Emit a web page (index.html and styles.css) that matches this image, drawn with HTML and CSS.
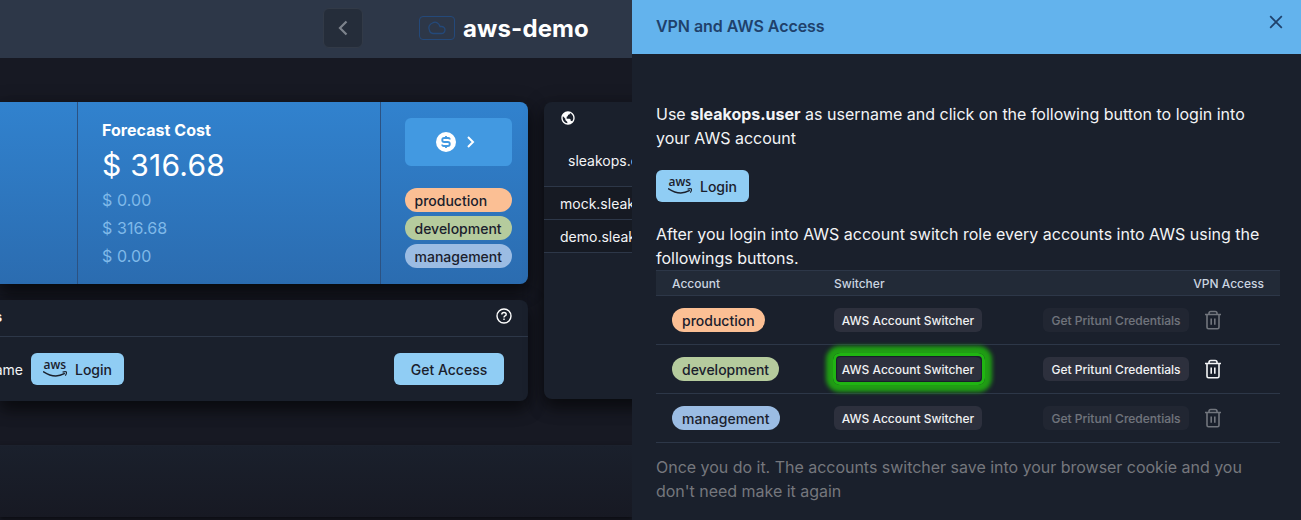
FILE: index.html
```html
<!DOCTYPE html>
<html lang="en">
<head>
<meta charset="utf-8">
<title>VPN and AWS Access</title>
<link rel="stylesheet" href="styles.css">
</head>
<body>
<svg class="defs" width="0" height="0">
  <symbol id="aws" viewBox="0 0 24 16">
    <text x="0.6" y="8.2" class="aws-word" textLength="22.6" lengthAdjust="spacingAndGlyphs">aws</text>
    <path d="M.6 10.800Q11.500 18 21.300 12.700" fill="none" stroke="currentColor" stroke-width="1.400" stroke-linecap="round"/>
    <path d="M19.600 11.100Q22.500 10.200 23.400 10.900Q23.800 12.700 22.300 14.600" fill="none" stroke="currentColor" stroke-width="1.100"/>
  </symbol>
  <symbol id="trash" viewBox="0 0 18 20">
    <path d="M1 4.500h16M5 4.300V3.300Q5 1.500 6.800 1.500h4.400Q13 1.500 13 3.300v1M3 4.500v12.700Q3 18.700 4.500 18.700h9Q15 18.700 15 17.200V4.500M7.200 8.500v6.300M10.800 8.500v6.300" fill="none" stroke="currentColor" stroke-width="1.600" stroke-linecap="butt"/>
  </symbol>
</svg>
<div class="screen">
  <main class="page">
    <header class="topbar">
      <button class="back"><svg width="20" height="20" viewBox="0 0 20 20"><path d="M13.500 3.500 7 10 13.500 16.500" fill="none" stroke="currentColor" stroke-width="2.200"/></svg></button>
      <span class="cloud"><svg width="18" height="14" viewBox="0 0 18 14"><path d="M5 12.500a4 4 0 0 1-3.600-3.500A5 5 0 0 1 4.500 2C7.200.3 10.900 1.300 12 5.500H13.500a3.500 3.500 0 0 1 0 7z" fill="none" stroke="currentColor" stroke-width="1.300"/></svg></span>
      <h1>aws-demo</h1>
    </header>
    <div class="content">
      <div class="left">
        <section class="cost">
          <div class="cost-prev"></div>
          <div class="forecast">
            <strong>Forecast Cost</strong>
            <div class="total">$ 316.68</div>
            <div class="amount">$ 0.00</div>
            <div class="amount">$ 316.68</div>
            <div class="amount">$ 0.00</div>
          </div>
          <div class="cost-side">
            <button class="money">
              <svg width="20" height="20" viewBox="0 0 20 20"><circle cx="10" cy="10" r="10" fill="#fff"/><path d="M13.800 7.600Q13.800 6 12.200 6H8.300Q6.200 6 6.200 8T8.300 10h3.400q2.100 0 2.100 2t-2.100 2H7.800Q6.200 14 6.200 12.400M10 4v2M10 14v2" fill="none" stroke="#4299e1" stroke-width="1.800"/></svg>
              <svg width="8" height="12" viewBox="0 0 8 12"><path d="M1 1l5 5-5 5" fill="none" stroke="#fff" stroke-width="2"/></svg>
            </button>
            <div class="tags"><span class="tag orange">production</span><span class="tag green">development</span><span class="tag blue">management</span></div>
          </div>
        </section>
        <section class="access">
          <div class="access-head"><b>Access</b><svg width="16" height="16" viewBox="0 0 16 16"><circle cx="8" cy="8" r="7" fill="none" stroke="#fff" stroke-width="1.400"/><path d="M5.800 6.500Q5.800 4.500 8 4.500T10.200 6.400Q10.200 7.300 9 7.900Q8 8.400 8 9.500M8 10.500v1.500" fill="none" stroke="#fff" stroke-width="1.400"/></svg></div>
          <div class="access-body"><span class="who">username</span><button class="btn login"><svg width="24" height="16"><use href="#aws"/></svg><span>Login</span></button><button class="btn get">Get Access</button></div>
        </section>
      </div>
      <section class="domains">
        <div class="globe"><svg width="16" height="16" viewBox="0 0 24 24" fill="#fff"><path d="M12 2C6.486 2 2 6.486 2 12s4.486 10 10 10 10-4.486 10-10S17.514 2 12 2zM4 12c0-.899.156-1.762.431-2.569L6 11l2 2v2l2 2 1 1v1.931C7.061 19.436 4 16.072 4 12zm14.330 4.873C17.677 16.347 16.687 16 16 16v-1a2 2 0 0 0-2-2h-4v-3a2 2 0 0 0 2-2V7h1a2 2 0 0 0 2-2v-.411C17.928 5.778 20 8.650 20 12a7.947 7.947 0 0 1-1.670 4.873z"/></svg></div>
        <div class="root">sleakops.com</div>
        <div class="domain">mock.sleakops.com</div>
        <div class="domain">demo.sleakops.com</div>
      </section>
    </div>
    <div class="strip"></div>
  </main>
  <aside class="drawer">
    <header class="drawer-head"><h2>VPN and AWS Access</h2><svg width="14" height="14" viewBox="0 0 14 14"><path d="M1.200 1.200l11.600 11.600M12.800 1.200 1.200 12.800" stroke="currentColor" stroke-width="1.700"/></svg></header>
    <div class="drawer-body">
      <p>Use <b>sleakops.user</b> as username and click on the following button to login into your AWS account</p>
      <button class="btn login"><svg width="24" height="16"><use href="#aws"/></svg><span>Login</span></button>
      <p>After you login into AWS account switch role every accounts into AWS using the followings buttons.</p>
      <div class="table">
        <div class="thead"><span>Account</span><span>Switcher</span><span class="vpn">VPN Access</span></div>
        <div class="row"><div><span class="tag orange">production</span></div><div><button class="mini">AWS Account Switcher</button></div><div class="cred off"><button class="mini">Get Pritunl Credentials</button><svg width="18" height="20"><use href="#trash"/></svg></div></div>
        <div class="row"><div><span class="tag green">development</span></div><div><button class="mini focus">AWS Account Switcher</button></div><div class="cred"><button class="mini">Get Pritunl Credentials</button><svg width="18" height="20"><use href="#trash"/></svg></div></div>
        <div class="row"><div><span class="tag blue">management</span></div><div><button class="mini">AWS Account Switcher</button></div><div class="cred off"><button class="mini">Get Pritunl Credentials</button><svg width="18" height="20"><use href="#trash"/></svg></div></div>
      </div>
      <p class="note">Once you do it. The accounts switcher save into your browser cookie and you don't need make it again</p>
    </div>
  </aside>
</div>
</body>
</html>
```
FILE: styles.css
```css
* { box-sizing: border-box; margin: 0; }
body { background: #12131a; color: #f3f4f6; font: 16px/24px Inter, sans-serif; overflow: hidden; }
button { border: 0; padding: 0; font: inherit; color: inherit; }
svg { display: block; flex: none; }
.defs { position: absolute; }
.aws-word { font: 600 12.5px "Open Sans", sans-serif; fill: currentColor; }
.screen { display: grid; grid-template-columns: 632px 669px; height: 520px; overflow: hidden; }
.page { overflow: hidden; display: flex; flex-direction: column; background: #171923; }
.topbar { height: 58px; flex: none; background: #2d3748; display: flex; align-items: center; padding: 0 0 2px 323px; }
.back { width: 40px; height: 40px; border-radius: 6px; border: 1px solid #323a47; background: #252d3a; color: #7d838c; display: grid; place-items: center; }
.cloud { width: 36px; height: 24px; margin-left: 56px; border: 1px solid #24497a; border-radius: 4px; color: #24497a; display: grid; place-items: center; }
h1 { font-size: 24px; line-height: 32px; font-weight: 700; margin-left: 8px; padding-top: 2px; letter-spacing: .1px; color: #fff; }
.content { height: 387px; flex: none; display: grid; grid-template-columns: 528px 300px; gap: 16px; padding-top: 44px; align-items: start; overflow: hidden; }
.left { display: grid; grid-template-columns: 528px; gap: 16px; }
.cost, .access, .domains { box-shadow: 0 10px 15px rgba(0,0,0,.4), 0 4px 20px rgba(0,0,0,.35); }
.cost { height: 182px; border-radius: 0 8px 8px 0; background: linear-gradient(#3182ce, #2b6cb0); display: grid; grid-template: 182px / 78px 303px 147px; }
.cost-prev, .forecast { border-right: 1px solid #2c5282; }
.forecast { padding: 16px 24px 0; }
.forecast strong { display: block; color: #fff; font-weight: 700; letter-spacing: .05px; }
.total { font-size: 30px; line-height: 47px; letter-spacing: .25px; color: #fff; height: 44px; }
.amount { color: #7fb9e9; line-height: 28px; letter-spacing: .1px; }
.cost-side { padding: 16px 16px 0 24px; }
.money { width: 107px; height: 48px; border-radius: 6px; background: #4299e1; display: flex; align-items: center; justify-content: center; gap: 11px; padding-right: 6px; }
.tags { display: grid; gap: 4px; margin-top: 22px; }
.tag { display: inline-block; vertical-align: top; height: 24px; line-height: 26px; padding: 0 10px; border-radius: 12px; font-size: 14px; font-weight: 500; color: #1a202c; }
.tags .tag { width: 107px; padding: 0 9.5px; }
.orange { background: #fbbf94; }
.green { background: #b5cb9d; }
.blue { background: #9bbce3; }
.access { height: 101px; border-radius: 0 8px 8px 0; background: #1a202c; }
.access-head { height: 37px; border-bottom: 1px solid #2d3748; display: flex; align-items: flex-start; justify-content: space-between; padding: 8px 16px 0 0; }
.access-head b { width: 2px; font-size: 14px; line-height: 18px; display: flex; justify-content: flex-end; }
.access-body { display: flex; align-items: center; height: 64px; padding: 0 24px 0 0; font-size: 14px; }
.who { width: 23px; margin-right: 8px; display: flex; justify-content: flex-end; line-height: 24px; padding-top: 2px; }
.btn { height: 32px; border-radius: 6px; background: #90cdf4; color: #1a202c; font-size: 14px; line-height: 34px; font-weight: 500; }
.login { width: 93px; display: flex; align-items: center; padding-left: 12px; gap: 8px; }
.login span { line-height: 24px; padding-top: 2px; }
.get { width: 110px; margin-left: auto; }
.domains { height: 297px; border-radius: 8px; background: #1a202c; overflow: hidden; font-size: 14px; }
.globe { padding: 8px 16px; height: 34px; }
.root { height: 51px; line-height: 50px; padding-left: 24px; border-bottom: 1px solid #2d3748; }
.domain { height: 33px; line-height: 33px; padding-left: 16px; background: #161a23; border-bottom: 1px solid #2d3748; }
.strip { height: 72px; background: linear-gradient(#1a202c, #171923); border-top: 1px solid #1c212d; box-shadow: 0 2px 4px #0b0c11; flex: none; }
.drawer { background: #1a202c; position: relative; }
.drawer-head { height: 54px; background: #63b3ed; color: #1f416b; display: flex; justify-content: space-between; padding: 15px 18px 0 24px; }
h2 { font-size: 16px; line-height: 24px; font-weight: 600; margin-top: -1px; letter-spacing: -.05px; }
.drawer-body { padding: 48px 21px 0 24px; }
.drawer-body > .btn { margin: 20px 0; }
.table { font-size: 12px; font-weight: 500; }
.thead { height: 26px; line-height: 25px; background: #222a37; border: solid #2d3748; border-width: 1px 0; color: #cbd5e0; display: grid; grid-template-columns: 162px 192px 1fr; padding: 0 16px; }
.vpn { text-align: right; }
.row { height: 49px; border-bottom: 1px solid #2d3748; display: grid; grid-template-columns: 162px 209px 1fr; align-items: center; padding-left: 16px; }
.mini { display: block; position: relative; height: 24px; width: 148px; border-radius: 6px; background: #2d303d; color: #f0f1f3; font-size: 12px; font-weight: 500; line-height: 25px; white-space: nowrap; }
.cred { display: flex; align-items: center; gap: 15px; }
.cred .mini { width: 146px; }
.off { opacity: .4; }
.focus::after { content: ""; position: absolute; inset: -4px -3px -4px -1px; border: 3px solid #20b512; border-radius: 7px; box-shadow: 0 0 4px 7px #209e14, inset 0 0 1px 1px #1a202c; }
.note { color: #75777d; margin-top: 12px; letter-spacing: -.02px; }
```
